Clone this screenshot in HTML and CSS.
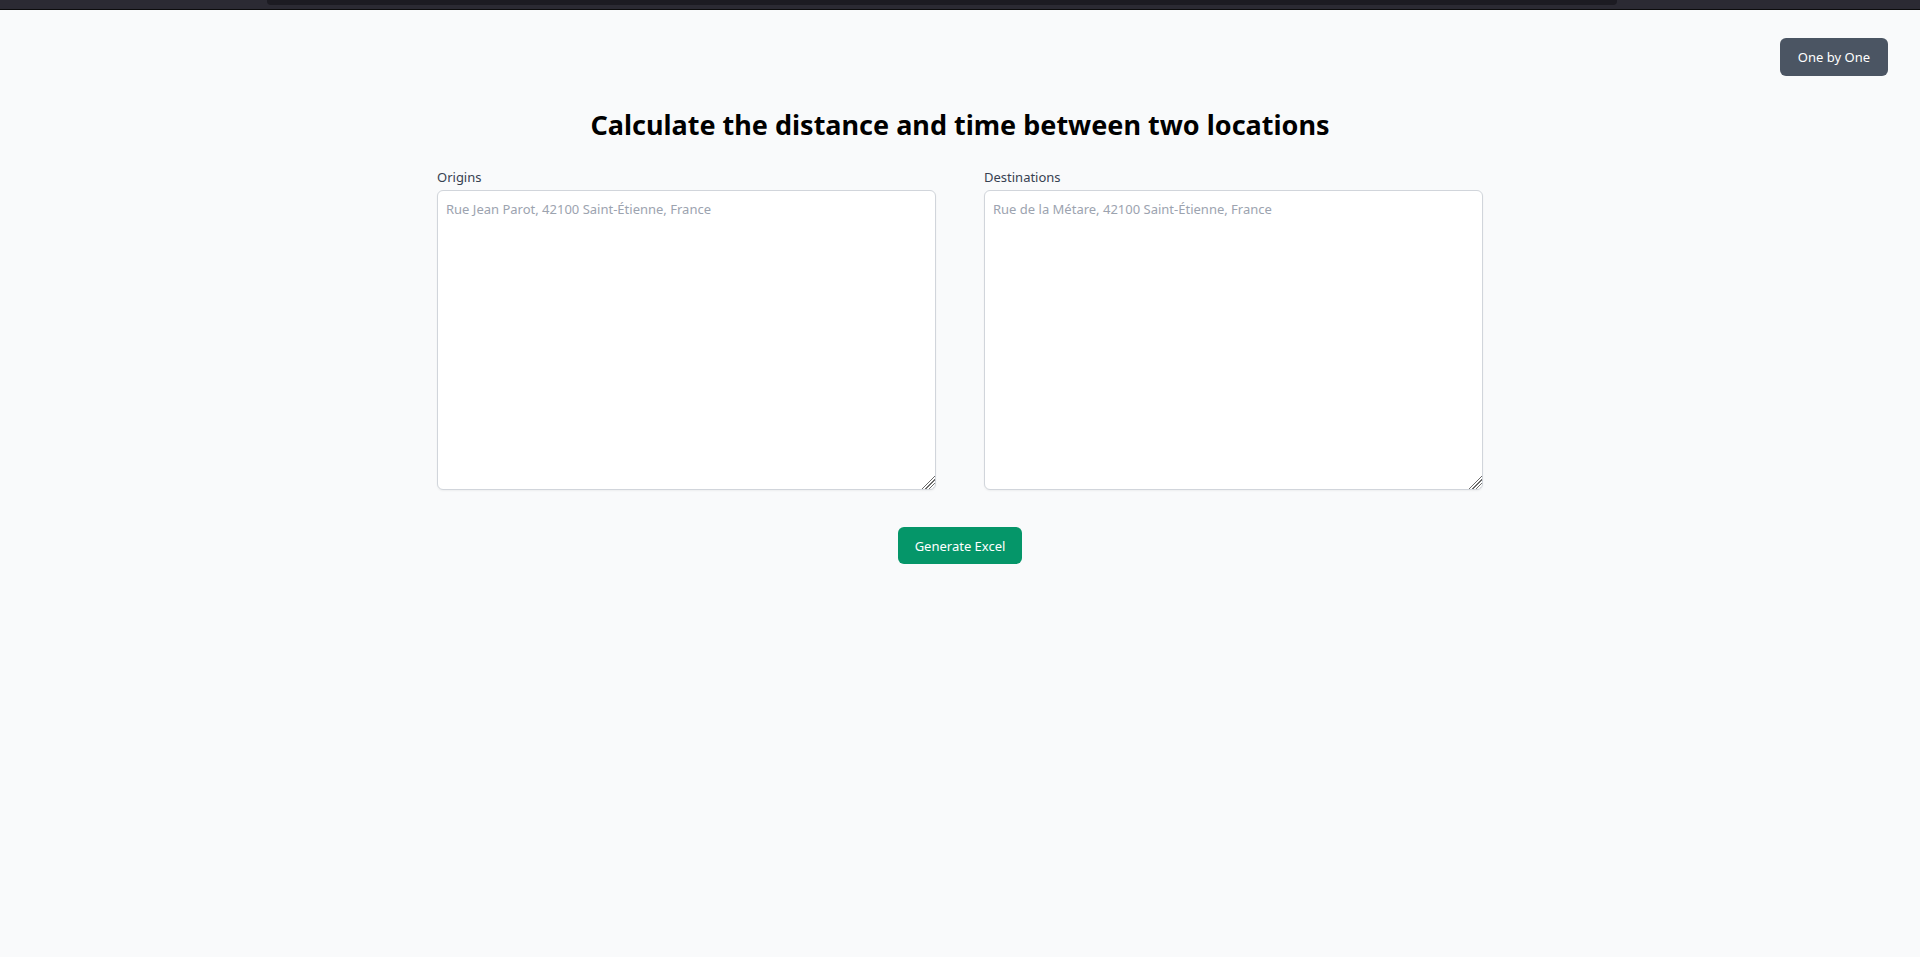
FILE: index.html
```html
<!DOCTYPE html>
<html lang="en">
<head>
<meta charset="utf-8">
<title>Distance Calculator</title>
<link rel="stylesheet" href="styles.css">
</head>
<body>
<div class="chrome"><div class="chrome-tab"></div></div>
<div class="page">
  <div class="topbar">
    <button class="btn btn-gray" type="button">One by One</button>
  </div>
  <h1 class="title">Calculate the distance and time between two locations</h1>
  <form class="form">
    <div class="fields">
      <div class="field">
        <label class="label" for="origins">Origins</label>
        <textarea id="origins" class="input" placeholder="Rue Jean Parot, 42100 Saint-Étienne, France"></textarea>
      </div>
      <div class="field">
        <label class="label" for="destinations">Destinations</label>
        <textarea id="destinations" class="input" placeholder="Rue de la Métare, 42100 Saint-Étienne, France"></textarea>
      </div>
    </div>
    <div class="actions">
      <button class="btn btn-green" type="button">Generate Excel</button>
    </div>
  </form>
</div>
</body>
</html>
```
FILE: styles.css
```css
html, body {
  margin: 0;
  padding: 0;
}
body {
  background: #f9fafb;
  font-family: "Noto Sans", "Open Sans", sans-serif;
  color: #111827;
  min-height: 957px;
}
.chrome {
  height: 9px;
  background: #2b2a33;
  border-bottom: 1px solid #0c0c0d;
  display: flex;
}
.chrome-tab {
  margin-left: 267px;
  width: 1350px;
  height: 5px;
  background: #1c1b22;
  border-radius: 0 0 4px 4px;
}
.page {
  display: flex;
  flex-direction: column;
  align-items: center;
}
.topbar {
  align-self: stretch;
  display: flex;
  justify-content: flex-end;
  padding: 28px 32px 0;
}
.btn {
  border: none;
  border-radius: 6px;
  color: #ffffff;
  font-family: inherit;
  font-size: 13px;
  height: 38px;
  padding: 0 17px;
  display: flex;
  align-items: center;
  cursor: pointer;
}
.btn-gray {
  background: #4b5563;
  padding: 0 18px;
}
.btn-green {
  background: #059669;
  height: 37px;
}
.title {
  margin: 31px 0 0;
  font-size: 27px;
  line-height: 36px;
  font-weight: 700;
  color: #000000;
}
.form {
  width: 1046px;
  margin-top: 24px;
}
.fields {
  display: grid;
  grid-template-columns: 1fr 1fr;
  gap: 48px;
}
.field {
  display: flex;
  flex-direction: column;
}
.label {
  font-size: 13px;
  line-height: 20px;
  color: #374151;
  margin-bottom: 3px;
}
.input {
  box-sizing: border-box;
  height: 300px;
  border: 1px solid #d1d5db;
  border-radius: 6px;
  background: #ffffff;
  box-shadow: 0 1px 2px rgba(0, 0, 0, 0.05);
  padding: 8px 8px;
  font-family: inherit;
  font-size: 13px;
  line-height: 20px;
  color: #111827;
  resize: vertical;
}
.input::placeholder {
  color: #9ca3af;
}
.input::-webkit-resizer {
  background:
    linear-gradient(135deg, #ffffff 0 52%, transparent 52%),
    repeating-linear-gradient(135deg, transparent 0 1.5px, #6b6b6b 1.5px 2.5px);
  border-bottom-right-radius: 6px;
}
.actions {
  display: flex;
  justify-content: center;
  margin-top: 37px;
}
```
